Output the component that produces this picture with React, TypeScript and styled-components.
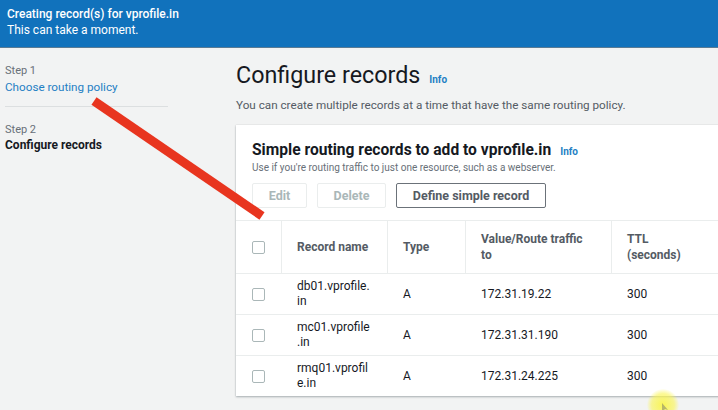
import React from "react";
import styled, { createGlobalStyle } from "styled-components";

const GlobalStyle = createGlobalStyle`
  html, body { margin: 0; padding: 0; }
  body {
    background: #f2f3f3;
    font-family: Roboto, "Liberation Sans", Arial, sans-serif;
    color: #16191f;
    width: 718px;
    height: 410px;
    overflow: hidden;
  }
`;

const Page = styled.div`
  position: relative;
  width: 718px;
  height: 410px;
  overflow: hidden;
  background: #f2f3f3;
`;

const Banner = styled.div`
  height: 48px;
  box-sizing: border-box;
  background: #1172bc;
  color: #ffffff;
  padding: 7px 7px;
  border-bottom: 1px solid #5a7b94;
  display: flex;
  flex-direction: column;
  gap: 1px;
`;

const BannerTitle = styled.div`
  font-weight: 500;
  font-size: 12px;
  line-height: 15px;
`;

const BannerText = styled.div`
  font-size: 12px;
  line-height: 15px;
`;

const Layout = styled.div`
  display: flex;
`;

const Sidebar = styled.nav`
  width: 236px;
  flex: none;
  padding: 16px 0 0 5px;
  box-sizing: border-box;
`;

const Step = styled.div<{ $divider?: boolean }>`
  width: 163px;
  padding-bottom: 10px;
  border-bottom: ${(p) => (p.$divider ? "1px solid #dcdfe0" : "none")};
  margin-bottom: 16px;
`;

const StepLabel = styled.div`
  font-size: 11px;
  line-height: 14px;
  color: #687078;
  margin-bottom: 1px;
`;

const StepLink = styled.a`
  display: block;
  font-size: 11.7px;
  line-height: 17px;
  color: #1f7fc4;
  text-decoration: none;
`;

const StepCurrent = styled.div`
  font-size: 12px;
  line-height: 15px;
  font-weight: bold;
  color: #16191f;
`;

const Main = styled.main`
  flex: 1;
  padding-top: 13px;
  min-width: 0;
`;

const HeadingRow = styled.div`
  display: flex;
  align-items: baseline;
  gap: 9px;
`;

const Heading = styled.h1`
  margin: 0;
  font-weight: normal;
  font-size: 23.3px;
  line-height: 28px;
  color: #16191f;
`;

const Info = styled.span`
  font-size: 10px;
  font-weight: bold;
  color: #1f7fc4;
`;

const Description = styled.p`
  margin: 8px 0 0;
  font-size: 11.7px;
  line-height: 16px;
  color: #545b64;
`;

const Card = styled.section`
  margin-top: 12px;
  width: 500px;
  background: #ffffff;
  box-shadow: 0 1px 2px rgba(0, 28, 36, 0.3), 0 0 1px rgba(0, 28, 36, 0.15);
`;

const CardHeader = styled.header`
  padding: 16px 16px 12px;
  border-bottom: 1px solid #eaeded;
`;

const CardTitleRow = styled.div`
  display: flex;
  align-items: baseline;
  gap: 9px;
`;

const CardTitle = styled.h2`
  margin: 0;
  font-size: 15.6px;
  line-height: 19px;
  font-weight: bold;
  color: #16191f;
`;

const CardSubtitle = styled.div`
  font-size: 10px;
  line-height: 14px;
  color: #687078;
  margin-top: 1px;
`;

const Actions = styled.div`
  display: flex;
  gap: 10px;
  margin-top: 8px;
`;

const Button = styled.button<{ $disabled?: boolean; $w: number }>`
  width: ${(p) => p.$w}px;
  height: 25px;
  box-sizing: border-box;
  padding: 0;
  background: #ffffff;
  border: 1px solid ${(p) => (p.$disabled ? "#eaeded" : "#6b7279")};
  border-radius: 2px;
  font-family: inherit;
  font-size: 12.5px;
  font-weight: bold;
  color: ${(p) => (p.$disabled ? "#aab7b8" : "#545b64")};
`;

const Table = styled.div`
  display: grid;
  grid-template-columns: 45px 106px 78px 146px 1fr;
`;

const HeadCell = styled.div<{ $sep?: boolean }>`
  height: 52px;
  display: flex;
  align-items: center;
  padding-left: 16px;
  font-size: 12px;
  line-height: 16px;
  font-weight: bold;
  color: #545b64;
  border-bottom: 1px solid #eaeded;
  box-shadow: ${(p) => (p.$sep ? "inset 1px 0 0 #eaeded" : "none")};
`;

const Cell = styled.div<{ $last?: boolean }>`
  height: 40px;
  display: flex;
  align-items: center;
  padding-left: 16px;
  font-size: 12px;
  line-height: 15px;
  color: #16191f;
  border-bottom: ${(p) => (p.$last ? "none" : "1px solid #eaeded")};
`;

const Checkbox = styled.span`
  width: 11px;
  height: 11px;
  border: 1px solid #aab7b8;
  border-radius: 2px;
  background: #fff;
`;

const Overlay = styled.svg`
  position: absolute;
  left: 0;
  top: 0;
  pointer-events: none;
`;

const Cursor = styled.div`
  position: absolute;
  left: 647px;
  top: 389px;
  width: 32px;
  height: 32px;
  border-radius: 50%;
  background: radial-gradient(circle, rgba(250, 245, 60, 0.85) 0%, rgba(250, 245, 80, 0.6) 50%, rgba(250, 245, 80, 0) 72%);
`;

const rows = [
  { name: ["db01.vprofile.", "in"], type: "A", value: "172.31.19.22", ttl: "300" },
  { name: ["mc01.vprofile", ".in"], type: "A", value: "172.31.31.190", ttl: "300" },
  { name: ["rmq01.vprofil", "e.in"], type: "A", value: "172.31.24.225", ttl: "300" },
];

export default function App() {
  return (
    <Page>
      <GlobalStyle />
      <Banner>
        <BannerTitle>Creating record(s) for vprofile.in</BannerTitle>
        <BannerText>This can take a moment.</BannerText>
      </Banner>
      <Layout>
        <Sidebar>
          <Step $divider>
            <StepLabel>Step 1</StepLabel>
            <StepLink href="#">Choose routing policy</StepLink>
          </Step>
          <Step>
            <StepLabel>Step 2</StepLabel>
            <StepCurrent>Configure records</StepCurrent>
          </Step>
        </Sidebar>
        <Main>
          <HeadingRow>
            <Heading>Configure records</Heading>
            <Info>Info</Info>
          </HeadingRow>
          <Description>
            You can create multiple records at a time that have the same routing policy.
          </Description>
          <Card>
            <CardHeader>
              <CardTitleRow>
                <CardTitle>Simple routing records to add to vprofile.in</CardTitle>
                <Info>Info</Info>
              </CardTitleRow>
              <CardSubtitle>
                Use if you're routing traffic to just one resource, such as a webserver.
              </CardSubtitle>
              <Actions>
                <Button $disabled $w={55}>Edit</Button>
                <Button $disabled $w={69}>Delete</Button>
                <Button $w={150}>Define simple record</Button>
              </Actions>
            </CardHeader>
            <Table>
              <HeadCell>
                <Checkbox />
              </HeadCell>
              <HeadCell $sep>Record name</HeadCell>
              <HeadCell $sep>Type</HeadCell>
              <HeadCell $sep>
                Value/Route traffic
                <br />
                to
              </HeadCell>
              <HeadCell $sep>
                TTL
                <br />
                (seconds)
              </HeadCell>
              {rows.map((r, i) => {
                const last = i === rows.length - 1;
                return (
                  <React.Fragment key={r.value}>
                    <Cell $last={last}>
                      <Checkbox />
                    </Cell>
                    <Cell $last={last}>
                      <span>
                        {r.name[0]}
                        <br />
                        {r.name[1]}
                      </span>
                    </Cell>
                    <Cell $last={last}>{r.type}</Cell>
                    <Cell $last={last}>{r.value}</Cell>
                    <Cell $last={last}>{r.ttl}</Cell>
                  </React.Fragment>
                );
              })}
            </Table>
          </Card>
        </Main>
      </Layout>
      <Overlay width="718" height="410" viewBox="0 0 718 410">
        <line x1="94" y1="101" x2="262" y2="216" stroke="#e8351f" strokeWidth="9" strokeLinecap="butt" />
      </Overlay>
      <Cursor />
      <Overlay width="718" height="410" viewBox="0 0 718 410">
        <polygon points="662,403 662,412 665,409 668,410" fill="#8a8a6a" opacity="0.6" />
      </Overlay>
    </Page>
  );
}
